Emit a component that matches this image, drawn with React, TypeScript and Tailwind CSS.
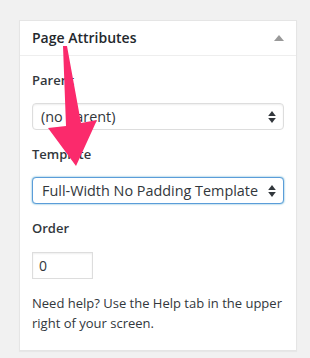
import React from 'react';

const Spinner = () => (
  <svg width="8" height="13" viewBox="0 0 8 13" className="absolute right-[7px] top-1/2 -translate-y-1/2">
    <path d="M4 0.5 L7.8 5.5 L0.2 5.5 Z" fill="#32373c" />
    <path d="M4 12.5 L7.8 7.5 L0.2 7.5 Z" fill="#32373c" />
  </svg>
);

const App = () => {
  return (
    <div className="relative w-[310px] h-[358px] bg-[#f1f1f1] pt-[20px] pl-[19px]" style={{ fontFamily: '"Open Sans", "Noto Sans", sans-serif' }}>
      <div className="w-[278px] bg-white border border-[#e5e5e5] shadow-[0_1px_1px_rgba(0,0,0,0.04)] text-[#32373c]">
        <div className="flex items-center justify-between h-[35px] pl-[12px] pr-[12px] border-b border-[#eee]">
          <h2 className="text-[14px] font-semibold text-[#23282d] leading-none">Page Attributes</h2>
          <svg width="10" height="6" viewBox="0 0 10 6"><path d="M5 0 L10 6 L0 6 Z" fill="#999" /></svg>
        </div>
        <div className="px-[12px] pt-[15px] pb-[17px] text-[13px]">
          <p className="font-semibold leading-[18px]">Parent</p>
          <div className="relative mt-[14px] h-[27px] border border-[#ddd] rounded-[4px] bg-white shadow-[inset_0_1px_2px_rgba(0,0,0,0.07)] flex items-center pl-[8px] text-[14.4px]">
            (no parent)
            <Spinner />
          </div>
          <p className="font-semibold leading-[18px] mt-[15px]">Template</p>
          <div className="relative mt-[14px] h-[27px] border border-[#5b9dd9] rounded-[4px] bg-white shadow-[0_0_2px_rgba(30,140,190,0.8)] flex items-center pl-[9px] text-[14.4px]">
            Full-Width No Padding Template
            <Spinner />
          </div>
          <p className="font-semibold leading-[18px] mt-[15px]">Order</p>
          <div className="mt-[15px] w-[61px] h-[27px] border border-[#ddd] shadow-[inset_0_1px_2px_rgba(0,0,0,0.07)] flex items-center pl-[6px] text-[14px]">0</div>
          <p className="mt-[14px] leading-[20px]">Need help? Use the Help tab in the upper right of your screen.</p>
        </div>
      </div>
      <svg width="310" height="358" className="absolute left-0 top-0 pointer-events-none">
        <polygon points="63,46 67,46 81,123 97,120 76,166 48,128 66,126" fill="#fb2a6c" />
      </svg>
    </div>
  );
};

export default App;
